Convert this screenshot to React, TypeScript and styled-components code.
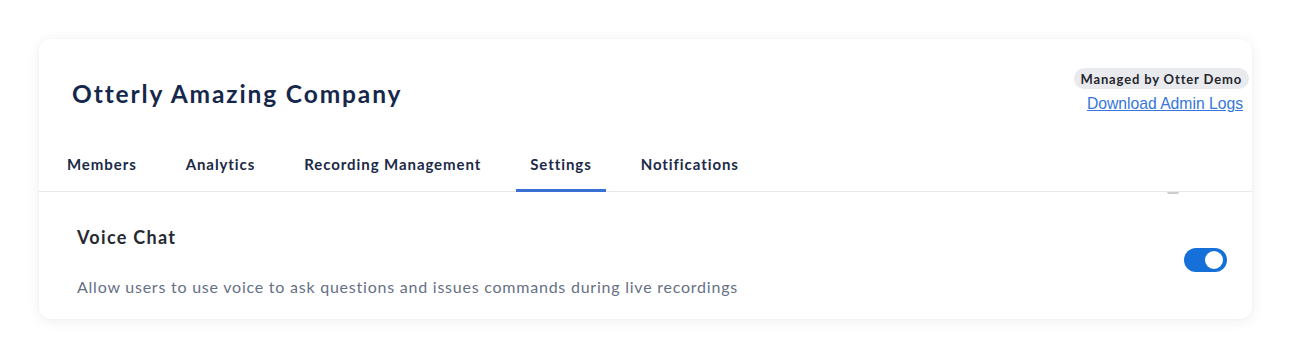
import React from "react";
import styled, { createGlobalStyle } from "styled-components";

const Global = createGlobalStyle`
  html, body { margin: 0; padding: 0; background: #ffffff; }
  body { font-family: Lato, "Open Sans", sans-serif; }
  * { box-sizing: border-box; }
`;

const Page = styled.div`
  width: 1291px;
  height: 358px;
  padding: 39px 39px 0 39px;
  background: #ffffff;
`;

const Card = styled.section`
  width: 1213px;
  height: 280px;
  background: #ffffff;
  border-radius: 12px;
  box-shadow: 0 2px 14px rgba(0, 0, 0, 0.07), 0 0 3px rgba(0, 0, 0, 0.03);
  display: flex;
  flex-direction: column;
  overflow: hidden;
`;

const Header = styled.header`
  display: flex;
  justify-content: space-between;
  align-items: flex-start;
  padding: 29px 3px 0 33px;
  height: 105px;
`;

const Title = styled.h1`
  margin: 11px 0 0 0;
  font-size: 24.5px;
  font-weight: 700;
  color: #15284b;
  letter-spacing: 1.88px;
`;

const Side = styled.div`
  display: flex;
  flex-direction: column;
  align-items: flex-end;
  gap: 6px;
`;

const Badge = styled.span`
  display: inline-flex;
  align-items: center;
  height: 21px;
  padding: 0 7px;
  border-radius: 11px;
  background: #e9eaee;
  color: #25272c;
  font-size: 13px;
  font-weight: 700;
  letter-spacing: 0.85px;
`;

const AdminLink = styled.a`
  margin-right: 6px;
  font-family: "Liberation Sans", Arial, sans-serif;
  font-size: 15.7px;
  color: #3576dc;
  text-decoration: underline;
`;

const Tabs = styled.nav`
  display: flex;
  gap: 21px;
  padding: 0 14px;
  border-bottom: 1px solid #e8e9ec;
  height: 48px;
`;

const Tab = styled.div<{ $active?: boolean }>`
  display: flex;
  align-items: center;
  padding: 0 14px 5px;
  font-size: 15px;
  font-weight: 700;
  letter-spacing: 0.92px;
  color: #1b2a47;
  border-bottom: 3px solid ${(p) => (p.$active ? "#3a70d3" : "transparent")};
  margin-bottom: -1px;
`;

const Content = styled.div`
  flex: 1;
  display: flex;
  flex-direction: column;
  padding: 0 25px 0 38px;
`;

const ScrollRemnant = styled.div`
  align-self: flex-end;
  width: 12px;
  height: 2px;
  margin-right: 48px;
  border-radius: 0 0 6px 6px;
  background: #b8b9bd;
  opacity: 0.7;
`;

const Row = styled.div`
  display: flex;
  align-items: center;
  justify-content: space-between;
  flex: 1;
`;

const RowText = styled.div`
  display: flex;
  flex-direction: column;
  gap: 29px;
  padding-top: 9px;
`;

const RowTitle = styled.h2`
  margin: 0;
  font-size: 18px;
  font-weight: 700;
  letter-spacing: 1.3px;
  color: #262a31;
`;

const RowDesc = styled.p`
  margin: 0;
  font-size: 16px;
  font-weight: 400;
  letter-spacing: 0.77px;
  color: #667085;
`;

const Switch = styled.button<{ $on: boolean }>`
  position: relative;
  width: 43px;
  height: 24px;
  border: none;
  padding: 0;
  border-radius: 12px;
  background: ${(p) => (p.$on ? "#1670d9" : "#c5c8ce")};
  cursor: pointer;
  margin-top: 6px;
`;

const Knob = styled.span<{ $on: boolean }>`
  position: absolute;
  top: 3px;
  left: ${(p) => (p.$on ? "21px" : "3px")};
  width: 18px;
  height: 18px;
  border-radius: 50%;
  background: #ffffff;
`;

const tabs = ["Members", "Analytics", "Recording Management", "Settings", "Notifications"];

export default function App() {
  const [on, setOn] = React.useState(true);
  return (
    <Page>
      <Global />
      <Card>
        <Header>
          <Title>Otterly Amazing Company</Title>
          <Side>
            <Badge>Managed by Otter Demo</Badge>
            <AdminLink href="#">Download Admin Logs</AdminLink>
          </Side>
        </Header>
        <Tabs>
          {tabs.map((t) => (
            <Tab key={t} $active={t === "Settings"}>
              {t}
            </Tab>
          ))}
        </Tabs>
        <Content>
          <ScrollRemnant />
          <Row>
            <RowText>
              <RowTitle>Voice Chat</RowTitle>
              <RowDesc>Allow users to use voice to ask questions and issues commands during live recordings</RowDesc>
            </RowText>
            <Switch $on={on} onClick={() => setOn(!on)} aria-label="Voice Chat">
              <Knob $on={on} />
            </Switch>
          </Row>
        </Content>
      </Card>
    </Page>
  );
}
